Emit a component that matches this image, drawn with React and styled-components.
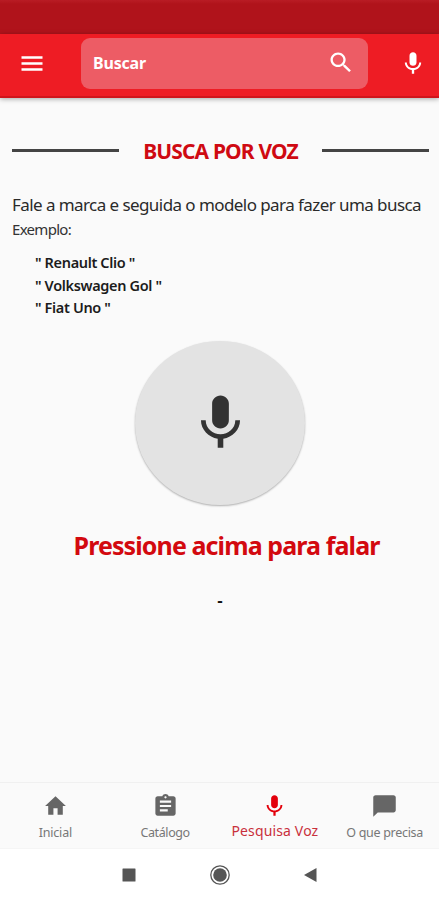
import React, { useState } from 'react';
import styled, { createGlobalStyle } from 'styled-components';

const GlobalStyle = createGlobalStyle`
  * {
    box-sizing: border-box;
  }

  body {
    margin: 0;
    background: #fafafa;
    font-family: 'Noto Sans', 'Open Sans', sans-serif;
  }

  button {
    padding: 0;
    border: none;
    background: none;
    font-family: inherit;
    cursor: pointer;
  }
`;

const Screen = styled.div`
  display: flex;
  flex-direction: column;
  width: 439px;
  height: 900px;
  overflow: hidden;
  background: #fafafa;
`;

const StatusBar = styled.div`
  flex: none;
  height: 34px;
  background: linear-gradient(#b91c25, #b0131b 4px);
`;

const Header = styled.header`
  display: flex;
  flex: none;
  align-items: flex-start;
  height: 64px;
  padding-top: 4px;
  background: #ee1c24;
  border-bottom: 2px solid #d0141b;
  box-shadow: 0 1px 5px rgba(0, 0, 0, 0.35);
`;

const HeaderButton = styled.button`
  display: flex;
  align-items: center;
  height: 51px;
  padding-left: ${(props) => props.$left}px;
  width: ${(props) => props.$width}px;
`;

const SearchBox = styled.div`
  display: flex;
  align-items: center;
  justify-content: space-between;
  width: 287px;
  height: 51px;
  padding: 0 13px 2px 12px;
  border-radius: 9px;
  background: #ed5c65;
`;

const SearchText = styled.span`
  color: #fff;
  font-size: 16px;
  font-weight: 700;
  letter-spacing: -0.2px;
`;

const Content = styled.main`
  flex: 1;
  padding: 38px 10px 0 12px;
`;

const TitleRow = styled.div`
  display: flex;
  align-items: center;
  justify-content: space-between;
  height: 30px;
`;

const Line = styled.div`
  width: 107px;
  height: 3px;
  margin-bottom: 1px;
  background: #444;
`;

const Title = styled.h1`
  margin: 0;
  color: #cf0a12;
  font-size: 21px;
  font-weight: 700;
  line-height: 30px;
  letter-spacing: -0.85px;
  white-space: nowrap;
`;

const Intro = styled.p`
  margin: 26px 0 0;
  color: #2a2a2a;
  font-size: 17px;
  font-weight: 400;
  line-height: 26px;
  letter-spacing: -0.57px;
  white-space: nowrap;
`;

const Label = styled.p`
  margin: -1px 0 0;
  color: #333;
  font-size: 15px;
  line-height: 24px;
  letter-spacing: -0.7px;
`;

const Examples = styled.ul`
  margin: 10px 0 0 23px;
  padding: 0;
  list-style: none;
`;

const Example = styled.li`
  color: #1c1c1c;
  font-size: 14.5px;
  font-weight: 600;
  line-height: 22.7px;
  letter-spacing: -0.35px;
`;

const VoiceArea = styled.section`
  display: flex;
  flex-direction: column;
  align-items: center;
  margin-top: 22px;
  padding-right: 1px;
`;

const VoiceButton = styled.button`
  display: flex;
  align-items: center;
  justify-content: center;
  width: 170px;
  height: 164px;
  border-radius: 50%;
  background: #e3e3e3;
  box-shadow: 0 1px 2px rgba(0, 0, 0, 0.3);
`;

const Hint = styled.h2`
  margin: 22px 0 0 13px;
  color: #d3090f;
  font-size: 25px;
  font-weight: 700;
  line-height: 36px;
  letter-spacing: -0.9px;
  white-space: nowrap;
`;

const Result = styled.p`
  margin: 26px 0 0;
  color: #111;
  font-size: 17px;
  font-weight: 600;
  line-height: 24px;
`;

const TabBar = styled.nav`
  display: grid;
  flex: none;
  grid-template-columns: repeat(4, 1fr);
  height: 67px;
  border-top: 1px solid #f0f0f0;
  border-bottom: 1px solid #f5f5f5;
`;

const Tab = styled.button`
  display: flex;
  flex-direction: column;
  align-items: center;
  padding: 10px 0 0 1px;
  color: ${(props) => (props.$active ? '#e3000b' : '#666')};
`;

const TabLabel = styled.span`
  margin-top: ${(props) => (props.$active ? 2 : 4)}px;
  color: ${(props) => (props.$active ? '#c9303c' : '#777')};
  font-size: ${(props) => (props.$active ? 14 : 12.5)}px;
  line-height: 20px;
  letter-spacing: ${(props) => props.$spacing}px;
  white-space: nowrap;
`;

const SystemBar = styled.div`
  display: flex;
  flex: none;
  align-items: center;
  justify-content: center;
  gap: 74px;
  height: 51px;
  background: #fff;
`;

const icons = {
  menu: 'M3 18h18v-2H3v2zm0-5h18v-2H3v2zm0-7v2h18V6H3z',
  search:
    'M15.5 14h-.79l-.28-.27C15.41 12.59 16 11.11 16 9.5 16 5.91 13.09 3 9.5 3S3 5.91 3 9.5 5.91 16 9.5 16c1.61 0 3.09-.59 4.23-1.57l.27.28v.79l5 4.99L20.49 19l-4.99-5zm-6 0C7.01 14 5 11.99 5 9.5S7.01 5 9.5 5 14 7.01 14 9.5 11.99 14 9.5 14z',
  mic: 'M12 14c1.66 0 2.99-1.34 2.99-3L15 5c0-1.66-1.34-3-3-3S9 3.34 9 5v6c0 1.66 1.34 3 3 3zm5.3-3c0 3-2.54 5.1-5.3 5.1S6.7 14 6.7 11H5c0 3.41 2.72 6.23 6 6.72V21h2v-3.28c3.28-.48 6-3.3 6-6.72h-1.7z',
  home: 'M10 20v-6h4v6h5v-8h3L12 3 2 12h3v8z',
  catalog:
    'M19 3h-4.18C14.4 1.84 13.3 1 12 1c-1.3 0-2.4.84-2.82 2H5c-1.1 0-2 .9-2 2v14c0 1.1.9 2 2 2h14c1.1 0 2-.9 2-2V5c0-1.1-.9-2-2-2zm-7 0c.55 0 1 .45 1 1s-.45 1-1 1-1-.45-1-1 .45-1 1-1zm2 14H7v-2h7v2zm3-4H7v-2h10v2zm0-4H7V7h10v2z',
  chat: 'M20 2H4c-1.1 0-1.99.9-1.99 2L2 22l4-4h14c1.1 0 2-.9 2-2V4c0-1.1-.9-2-2-2z',
};

function Icon({ name, width, height, color = 'currentColor' }) {
  return (
    <svg width={width} height={height} viewBox="0 0 24 24" preserveAspectRatio="none" fill={color}>
      <path d={icons[name]} />
    </svg>
  );
}

const tabs = [
  { icon: 'home', label: 'Inicial', width: 25, spacing: -0.2 },
  { icon: 'catalog', label: 'Catálogo', width: 27, spacing: -0.4 },
  { icon: 'mic', label: 'Pesquisa Voz', width: 27, spacing: 0.15 },
  { icon: 'chat', label: 'O que precisa', width: 27, spacing: -0.3 },
];

const examples = ['" Renault Clio "', '" Volkswagen Gol "', '" Fiat Uno "'];

function App() {
  const [active, setActive] = useState('mic');

  return (
    <>
      <GlobalStyle />
      <Screen>
        <StatusBar />
        <Header>
          <HeaderButton $left={18} $width={81} aria-label="Menu">
            <Icon name="menu" width={28} height={29} color="#fff" />
          </HeaderButton>
          <SearchBox>
            <SearchText>Buscar</SearchText>
            <Icon name="search" width={28} height={27} color="#fff" />
          </SearchBox>
          <HeaderButton $left={31} $width={71} aria-label="Voz">
            <Icon name="mic" width={28} height={27} color="#fff" />
          </HeaderButton>
        </Header>

        <Content>
          <TitleRow>
            <Line />
            <Title>BUSCA POR VOZ</Title>
            <Line />
          </TitleRow>
          <Intro>Fale a marca e seguida o modelo para fazer uma busca</Intro>
          <Label>Exemplo:</Label>
          <Examples>
            {examples.map((text) => (
              <Example key={text}>{text}</Example>
            ))}
          </Examples>
          <VoiceArea>
            <VoiceButton aria-label="Falar">
              <Icon name="mic" width={67} height={66} color="#333" />
            </VoiceButton>
            <Hint>Pressione acima para falar</Hint>
            <Result>-</Result>
          </VoiceArea>
        </Content>

        <TabBar>
          {tabs.map((tab) => (
            <Tab key={tab.icon} $active={active === tab.icon} onClick={() => setActive(tab.icon)}>
              <Icon name={tab.icon} width={tab.width} height={26} />
              <TabLabel $active={active === tab.icon} $spacing={tab.spacing}>{tab.label}</TabLabel>
            </Tab>
          ))}
        </TabBar>

        <SystemBar>
          <svg width="14" height="14" viewBox="0 0 14 14">
            <rect x="0.5" y="0.5" width="13" height="13" rx="0.5" fill="#555" />
          </svg>
          <svg width="20" height="20" viewBox="0 0 20 20">
            <circle cx="10" cy="10" r="9.2" fill="none" stroke="#555" strokeWidth="1.3" />
            <circle cx="10" cy="10" r="6.8" fill="#555" />
          </svg>
          <svg width="13" height="14" viewBox="0 0 13 14">
            <path d="M0 7L12.5 0v14z" fill="#555" />
          </svg>
        </SystemBar>
      </Screen>
    </>
  );
}

export default App;
